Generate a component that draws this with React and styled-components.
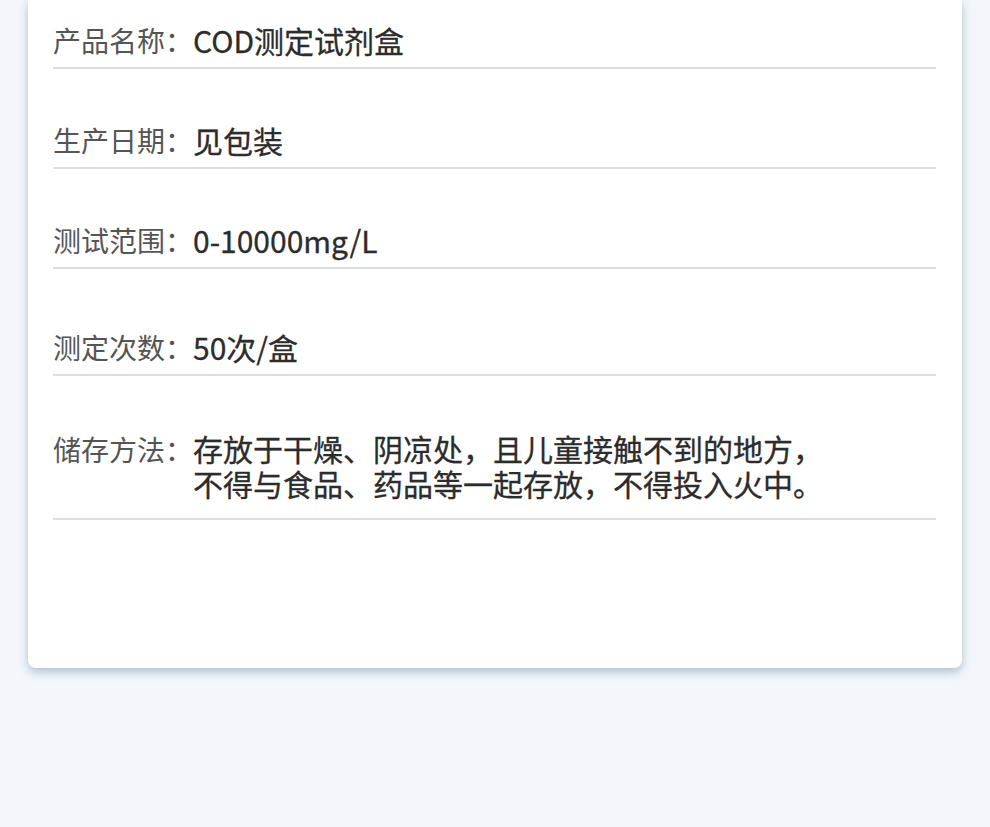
import styled, { createGlobalStyle } from 'styled-components';

const GlobalStyle = createGlobalStyle`
  html, body {
    margin: 0;
    padding: 0;
    background-color: #f3f7fb;
  }
  body {
    font-family: "Noto Sans CJK SC", "Noto Sans", sans-serif;
  }
`;

const Page = styled.div`
  width: 990px;
  height: 827px;
  padding: 0 28px;
  box-sizing: border-box;
  overflow: hidden;
`;

const Card = styled.div`
  background-color: #fff;
  border-radius: 0 0 8px 8px;
  box-shadow: 0 4px 10px rgba(90, 125, 155, 0.45);
  padding: 0 26px 148px 25px;
`;

const Row = styled.div`
  display: flex;
  align-items: flex-start;
  padding-top: ${(props) => props.top}px;
  padding-bottom: ${(props) => props.bottom || 9}px;
  border-bottom: 2px solid #dddddd;
  line-height: ${(props) => props.lh || 36}px;
`;

const Label = styled.span`
  flex-shrink: 0;
  width: 140px;
  font-size: 28px;
  color: #555;
  line-height: 36px;
`;

const Value = styled.span`
  font-size: 30px;
  font-weight: 400;
  color: #2c2c2c;
  -webkit-text-stroke: 0.3px #2c2c2c;
`;

const rows = [
  { label: '产品名称：', value: 'COD测定试剂盒', top: 22 },
  { label: '生产日期：', value: '见包装', top: 53 },
  { label: '测试范围：', value: '0-10000mg/L', top: 53 },
  { label: '测定次数：', value: '50次/盒', top: 60 },
];

const App = () => {
  return (
    <Page>
      <GlobalStyle />
      <Card>
        {rows.map((r) => (
          <Row key={r.label} top={r.top}>
            <Label>{r.label}</Label>
            <Value>{r.value}</Value>
          </Row>
        ))}
        <Row top={55} bottom={17} lh={35}>
          <Label>储存方法：</Label>
          <Value>
            存放于干燥、阴凉处，且儿童接触不到的地方，
            <br />
            不得与食品、药品等一起存放，不得投入火中。
          </Value>
        </Row>
      </Card>
    </Page>
  );
};

export default App;
